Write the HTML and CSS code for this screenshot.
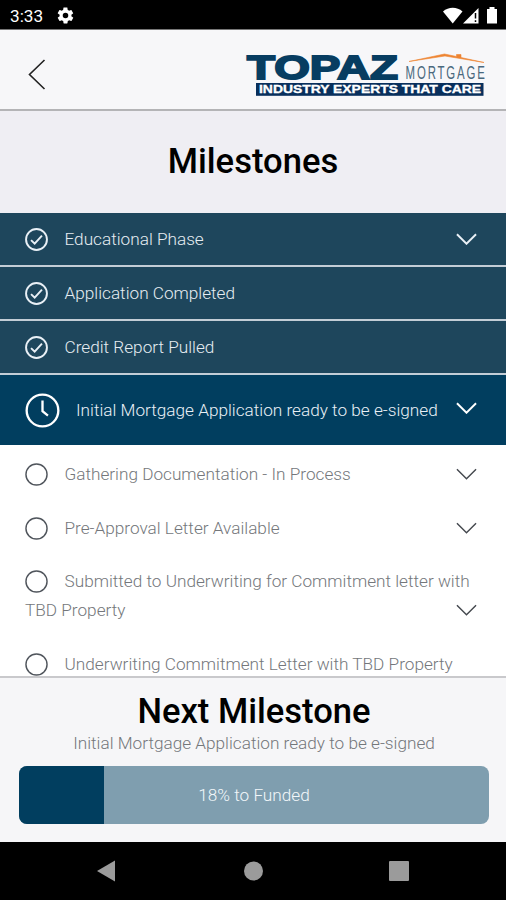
FILE: index.html
```
<!DOCTYPE html>
<html lang="en">
<head>
    <meta charset="UTF-8">
    <meta name="viewport" content="width=device-width, initial-scale=1.0">
    <title>Milestones</title>
    <link rel="stylesheet" href="styles.css">
</head>
<body>
    <svg class="symbols" width="0" height="0">
        <symbol id="check" viewBox="0 0 24 24">
            <circle cx="12" cy="12" r="10.9" />
            <path d="M6.3 12.6l3.8 3.8 7.6-8.4" />
        </symbol>
        <symbol id="circle" viewBox="0 0 24 24">
            <circle cx="12" cy="12" r="11" />
        </symbol>
        <symbol id="clock" viewBox="0 0 36 36">
            <circle cx="18" cy="18" r="16.3" />
            <path d="M18 7.8v11l5.6 4.4" />
        </symbol>
        <symbol id="chevron" viewBox="0 0 22 12">
            <path d="M1 1l10 10L21 1" />
        </symbol>
    </svg>

    <div class="status-bar">
        <span class="time">3:33</span>
        <svg class="gear" width="19" height="19" viewBox="0 0 24 24">
            <path d="M19.4 13c0-.3.1-.6.1-1s0-.7-.1-1l2.1-1.6c.2-.2.2-.4.1-.6l-2-3.5c-.1-.2-.4-.3-.6-.2l-2.5 1c-.5-.4-1.1-.7-1.7-1l-.4-2.6c0-.3-.2-.5-.5-.5h-4c-.2 0-.4.2-.5.4l-.4 2.700c-.6.2-1.1.6-1.7 1l-2.4-1c-.3-.1-.5 0-.7.2l-2 3.400c-.1.3 0 .5.2.7L4.600 11c0 .3-.1.7-.1 1s0 .7.1 1l-2.2 1.600c-.2.2-.2.4-.1.600l2 3.500c.1.2.4.3.6.2l2.500-1c.5.4 1.100.7 1.700 1l.4 2.600c0 .3.2.5.5.5h4c.2 0 .5-.2.5-.4l.4-2.700c.6-.2 1.100-.6 1.700-1l2.500 1c.2.1.5 0 .6-.2l2-3.500c.1-.2.1-.5-.1-.6zM12 15.500a3.500 3.500 0 1 1 0-7 3.500 3.500 0 0 1 0 7z" />
        </svg>
        <svg class="signals" width="56" height="18" viewBox="0 0 56 18">
            <path d="M0 4.500C5.500-.5 14-.5 19.500 4.500L9.700 16.500z" />
            <path d="M20 16.500L35.500 1v15.500z" />
            <path class="gap" d="M32.500 6v5.500M32.500 13.300v1.700" />
            <path d="M46.500 0h5v2H54v14.500H44V2h2.500z" />
        </svg>
    </div>

    <header class="header">
        <svg class="back" width="18" height="31" viewBox="0 0 18 31">
            <path d="M16.500 1L1.500 15.500l15 14.500" />
        </svg>
        <svg class="logo" width="240" height="48" viewBox="0 0 240 48">
            <text class="logo-name" x="1" y="28.500" textLength="151" lengthAdjust="spacingAndGlyphs">TOPAZ</text>
            <text class="logo-type" x="266" y="29" textLength="132" lengthAdjust="spacing" transform="scale(.6 1)">MORTGAGE</text>
            <path class="logo-roof" d="M163 11.500L198.500 4l12 2.500V4.500h4.500v3l23 5-39-6.500z" />
            <rect class="logo-band" x="10" y="33" width="227.500" height="12.800" />
            <text class="logo-slogan" x="13" y="43.300" textLength="222" lengthAdjust="spacingAndGlyphs">INDUSTRY EXPERTS THAT CARE</text>
        </svg>
    </header>

    <div class="page-title">
        <h1>Milestones</h1>
    </div>

    <div class="milestones">
        <div class="milestone done">
            <div class="label"><svg class="icon"><use href="#check" /></svg>Educational Phase</div>
            <svg class="chevron"><use href="#chevron" /></svg>
        </div>
        <div class="milestone done">
            <div class="label"><svg class="icon"><use href="#check" /></svg>Application Completed</div>
        </div>
        <div class="milestone done">
            <div class="label"><svg class="icon"><use href="#check" /></svg>Credit Report Pulled</div>
        </div>
        <div class="milestone current">
            <div class="label"><svg class="icon"><use href="#clock" /></svg>Initial Mortgage Application ready to be e-signed</div>
            <svg class="chevron"><use href="#chevron" /></svg>
        </div>
        <div class="milestone">
            <div class="label"><svg class="icon"><use href="#circle" /></svg>Gathering Documentation - In Process</div>
            <svg class="chevron"><use href="#chevron" /></svg>
        </div>
        <div class="milestone">
            <div class="label"><svg class="icon"><use href="#circle" /></svg>Pre-Approval Letter Available</div>
            <svg class="chevron"><use href="#chevron" /></svg>
        </div>
        <div class="milestone wrapped">
            <div class="label"><svg class="icon"><use href="#circle" /></svg>Submitted to Underwriting for Commitment letter with<br>TBD Property</div>
            <svg class="chevron"><use href="#chevron" /></svg>
        </div>
        <div class="milestone">
            <div class="label"><svg class="icon"><use href="#circle" /></svg>Underwriting Commitment Letter with TBD Property</div>
        </div>
    </div>

    <footer class="next">
        <h2>Next Milestone</h2>
        <p>Initial Mortgage Application ready to be e-signed</p>
        <div class="progress">
            <div class="progress-fill" style="width: 18%"></div>
            <span class="progress-text">18% to Funded</span>
        </div>
    </footer>

    <div class="nav-bar">
        <svg width="20" height="22" viewBox="0 0 20 22"><path d="M0 11L18 .5v21z" /></svg>
        <svg width="20" height="20" viewBox="0 0 20 20"><circle cx="10.500" cy="10" r="9.500" /></svg>
        <svg width="20" height="20" viewBox="0 0 20 20"><rect width="20" height="20" rx="1" /></svg>
    </div>
</body>
</html>
```

FILE: styles.css
```
* {
    box-sizing: border-box;
}
body {
    margin: 0;
    height: 900px;
    display: flex;
    flex-direction: column;
    overflow: hidden;
    font-family: Roboto, sans-serif;
    font-weight: 300;
    font-size: 17.2px;
    background-color: #fff;
}
h1, h2, p {
    margin: 0;
}
svg {
    flex: none;
}
.symbols {
    position: absolute;
}

/* Android status bar */
.status-bar {
    flex: none;
    height: 30px;
    display: flex;
    align-items: center;
    padding: 2px 7px 0 10px;
    background-color: #000;
    border-bottom: 1px solid #777;
    color: #fff;
    font-weight: 400;
}
.status-bar svg {
    fill: #fff;
}
.gear {
    margin-left: 13px;
}
.signals {
    margin-left: auto;
}
.signals .gap {
    stroke: #000;
    stroke-width: 1.5;
}

.header {
    flex: none;
    height: 81px;
    display: flex;
    align-items: center;
    justify-content: space-between;
    padding: 9px 20px 0 28px;
    background-color: #f7f7f9;
    border-bottom: 2px solid #b4b4b6;
}
.back {
    fill: none;
    stroke: #222;
    stroke-width: 1.6;
}
.logo {
    overflow: visible;
    font-family: "Liberation Sans", Arial, sans-serif;
}
.logo-name {
    font-size: 34px;
    font-weight: bold;
    fill: #073d61;
    stroke: #073d61;
    stroke-width: 1.8;
}
.logo-type {
    font-size: 19px;
    font-weight: normal;
    fill: #49687d;
}
.logo-roof {
    fill: #ee8532;
    stroke: #ee8532;
    stroke-width: 0.6;
}
.logo-band {
    fill: #082f5c;
}
.logo-slogan {
    font-size: 10.5px;
    font-weight: bold;
    fill: #fff;
    stroke: #fff;
    stroke-width: 0.3;
}

.page-title {
    flex: none;
    height: 102px;
    display: flex;
    align-items: center;
    justify-content: center;
    padding-bottom: 3px;
    background-color: #efeef3;
    color: #000;
}
h1, h2 {
    font-size: 34.6px;
    font-weight: 500;
    line-height: 40px;
}

.milestones {
    flex: 1;
    min-height: 0;
    overflow: hidden;
}
.milestone {
    display: flex;
    align-items: center;
    justify-content: space-between;
    min-height: 54px;
    padding: 0 29px 0 25px;
    line-height: 29px;
    color: #74777b;
    white-space: nowrap;
}
.icon {
    width: 23px;
    height: 23px;
    margin-right: 16.5px;
    vertical-align: -6px;
    fill: none;
    stroke: #50555c;
    stroke-width: 1.5;
}
.chevron {
    width: 21px;
    height: 12px;
    fill: none;
    stroke: #44484e;
    stroke-width: 1.5;
}
.done {
    background-color: #1e465c;
    border-bottom: 2px solid #c3cdd6;
    color: #e6edf2;
}
.done .icon, .done .chevron {
    stroke: #e9f0f6;
    stroke-width: 2;
}
.current {
    height: 70px;
    margin-bottom: 2px;
    background-color: #013e5f;
    color: #e9f0f6;
}
.current .icon {
    width: 35px;
    height: 35px;
    margin-right: 16px;
    vertical-align: -12px;
    stroke: #fff;
    stroke-width: 2.4;
}
.current .chevron {
    margin-bottom: 4px;
    stroke: #fff;
    stroke-width: 2;
}
.wrapped {
    align-items: flex-end;
    padding-top: 12px;
    padding-bottom: 12px;
}
.wrapped .label {
    width: 0;
}
.wrapped .chevron {
    margin-bottom: 9px;
}

.next {
    flex: none;
    height: 166px;
    padding: 13px 17px 0 19px;
    background-color: #f6f6f8;
    border-top: 2px solid #c9c9cc;
    text-align: center;
    color: #74777b;
}
.next h2 {
    color: #000;
}
.next p {
    line-height: 24px;
}
.progress {
    position: relative;
    display: flex;
    align-items: center;
    justify-content: center;
    height: 58px;
    margin-top: 11px;
    border-radius: 8px;
    overflow: hidden;
    background-color: #7f9eaf;
    color: #f2f7fa;
}
/* filled part lies under the centred text */
.progress-fill {
    position: absolute;
    top: 0;
    bottom: 0;
    left: 0;
    background-color: #013e5f;
}
.progress-text {
    position: relative;
}

.nav-bar {
    flex: none;
    height: 58px;
    display: flex;
    align-items: center;
    justify-content: space-between;
    padding: 0 97px;
    background-color: #000;
}
.nav-bar svg {
    fill: #9b9b9b;
}
```
